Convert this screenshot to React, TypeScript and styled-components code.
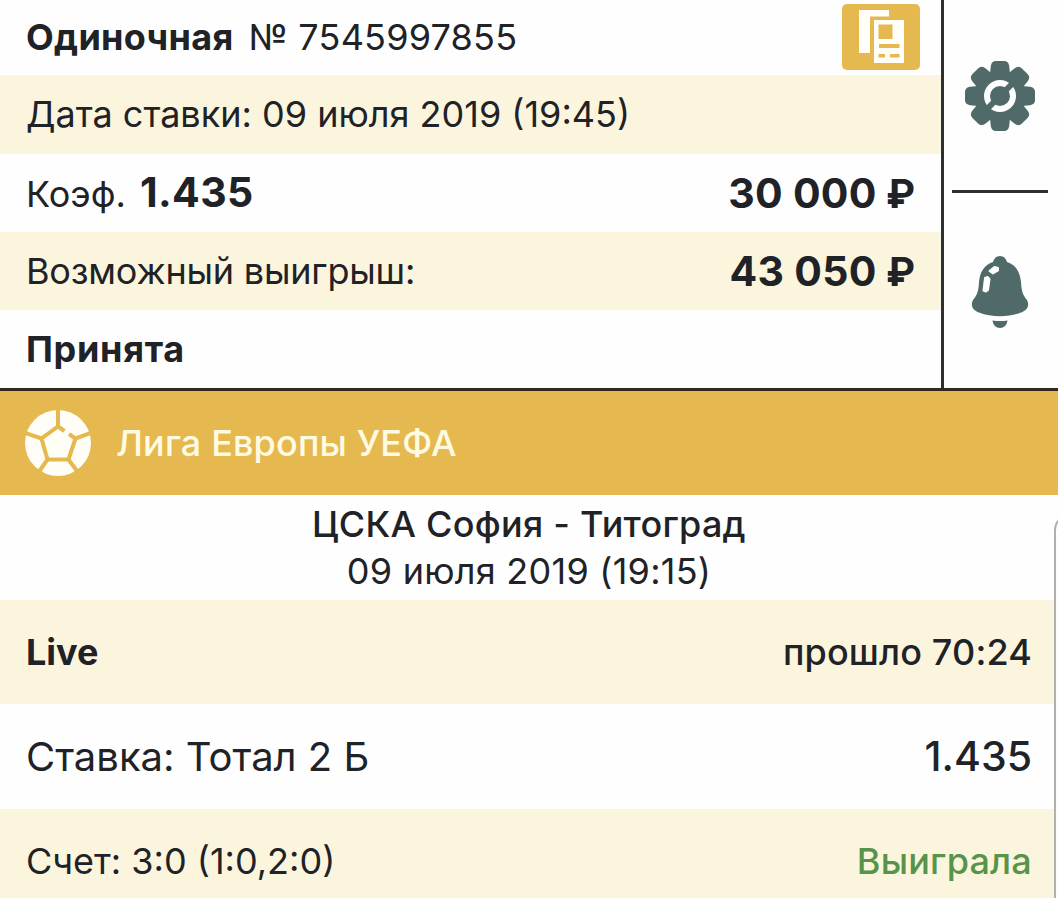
import React from 'react';
import styled, { createGlobalStyle } from 'styled-components';

const GlobalStyle = createGlobalStyle`
  * {
    box-sizing: border-box;
  }
  body {
    margin: 0;
    background: #fefefe;
    color: #1f2226;
    font-family: Inter, 'Liberation Sans', sans-serif;
    overflow: hidden;
  }
`;

const CopyIcon = () => (
  <svg width="78" height="66" viewBox="0 0 78 66">
    <path fill="#fffef8" d="M17 6H47V12.500H28V49H17Z" />
    <path
      fill="#fffef8"
      fillRule="evenodd"
      d="M32 16H62V59H32ZM36.500 20.500V35H50.500V20.500ZM37 40V44H57.500V40ZM36.500 50V53.500H43V50ZM48 50V53.500H57.500V50Z"
    />
  </svg>
);

const GearIcon = () => (
  <svg width="72" height="72" viewBox="-36 -36 72 72">
    <g fill="#4f6a69">
      <circle r="25.500" />
      {[0, 45, 90, 135, 180, 225, 270, 315].map(angle => (
        <path
          key={angle}
          d="M-10 -22L-9.200 -30Q-8.500 -35 -4 -35H4Q8.500 -35 9.200 -30L10 -22Z"
          transform={`rotate(${angle})`}
        />
      ))}
    </g>
    <circle r="13" fill="none" stroke="#fff" strokeWidth="6" />
    <path d="M-14 14L14 -14" stroke="#4f6a69" strokeWidth="6" />
  </svg>
);

const BellIcon = () => (
  <svg width="58" height="74" viewBox="0 0 58 74">
    <path
      fill="#4f6a69"
      d="M22 7C23 3 25.500 1 29 1S35 3 36 7C45 10 49 17 50 27C50.500 37 52 40 56 45C59 51 56 55 50 57.500C37 62.500 21 62.500 8 57.500C2 55 -1 51 2 45C6 40 7.500 37 8 27C9 17 13 10 22 7Z"
    />
    <path
      fill="#4f6a69"
      d="M21.500 65.500Q29 66.500 36.500 65.500C36 70 33 73 29 73S22 70 21.500 65.500Z"
    />
    <g fill="#fff" stroke="#fff" strokeWidth="2" strokeLinejoin="round">
      <path d="M18.500 16L23.500 12L27 13V15.500L22 18.500Z" />
      <path d="M14 23L16.500 22L18.500 24L17 35L15 36.500L12.500 35.500Z" />
    </g>
  </svg>
);

const BallIcon = () => (
  <svg width="66" height="66" viewBox="0 0 66 66">
    <circle cx="33" cy="33" r="33" fill="#fffef6" />
    <g fill="none" stroke="#e5b94f" strokeWidth="4">
      <path d="M39.500 21L33 16.500L16.500 28.500L22.500 49.500H43.500L50.500 28.500L44 24" />
      <path d="M33 0V16.500M16.500 28.500L0 23M22.500 49.500L14.500 61M43.500 49.500L52 61M50.500 28.500L66 23" />
    </g>
  </svg>
);

const Amount = ({ value }: { value: string }) => (
  <AmountText size={41} weight={700} spacing={0.3}>
    {value} <Ruble>₽</Ruble>
  </AmountText>
);

const App = () => (
  <Page>
    <GlobalStyle />
    <Summary>
      <Details>
        <Row height={75}>
          <Group gap={15}>
            <Text size={36} weight={700} spacing={0.3}>Одиночная</Text>
            <Text size={36} spacing={0.2}>№ 7545997855</Text>
          </Group>
          <CopyButton type="button" aria-label="Копировать">
            <CopyIcon />
          </CopyButton>
        </Row>
        <Row height={79} tinted>
          <Text size={36}>Дата ставки: 09 июля 2019 (19:45)</Text>
        </Row>
        <Row height={78}>
          <Group gap={14}>
            <Text size={36}>Коэф.</Text>
            <Text size={41} weight={700} spacing={0.4}>1.435</Text>
          </Group>
          <Amount value="30 000" />
        </Row>
        <Row height={78} tinted>
          <Text size={36} spacing={-0.2}>Возможный выигрыш:</Text>
          <Amount value="43 050" />
        </Row>
        <Row height={78}>
          <Text size={36} weight={700} spacing={0.7}>Принята</Text>
        </Row>
      </Details>
      <Actions>
        <Action shift={2}>
          <GearIcon />
        </Action>
        <Divider />
        <Action shift={7}>
          <BellIcon />
        </Action>
      </Actions>
    </Summary>
    <League>
      <BallIcon />
      <Text size={36} weight={500} spacing={0.15}>Лига Европы УЕФА</Text>
    </League>
    <Match>
      <Text size={36} weight={500} spacing={0.25}>ЦСКА София - Титоград</Text>
      <Text size={36} spacing={0.25}>09 июля 2019 (19:15)</Text>
    </Match>
    <Row height={104} tinted>
      <Text size={36} weight={700}>Live</Text>
      <Text size={36} weight={500} spacing={0.15}>прошло 70:24</Text>
    </Row>
    <Row height={105}>
      <Text size={40}>Ставка: Тотал 2 Б</Text>
      <Text size={41} weight={500}>1.435</Text>
    </Row>
    <Row height={105} tinted>
      <Text size={36}>Счет: 3:0 (1:0,2:0)</Text>
      <Text size={36} weight={500} spacing={0.2} color="#57944a">Выиграла</Text>
    </Row>
    <EdgePanel />
  </Page>
);

export default App;

const Page = styled.main`
  position: relative;
  width: 1058px;
  height: 898px;
  overflow: hidden;
`;

const Summary = styled.section`
  display: flex;
  height: 391px;
  border-bottom: 3px solid #30291b;
`;

const Details = styled.div`
  flex: 1;
`;

const Row = styled.div<{ height: number; tinted?: boolean }>`
  display: flex;
  align-items: center;
  justify-content: space-between;
  height: ${({ height }) => height}px;
  padding: 0 26px;
  background: ${({ tinted }) => (tinted ? '#fcf5de' : '#fefefe')};
`;

const Group = styled.div<{ gap: number }>`
  display: flex;
  align-items: baseline;
  gap: ${({ gap }) => gap}px;
`;

const Text = styled.span<{
  size: number;
  weight?: number;
  spacing?: number;
  color?: string;
}>`
  font-size: ${({ size }) => size}px;
  font-weight: ${({ weight }) => weight || 400};
  letter-spacing: ${({ spacing }) => spacing || 0}px;
  line-height: 47px;
  white-space: nowrap;
  ${({ color }) => color && `color: ${color};`}
`;

const AmountText = styled(Text)`
  padding-top: 2px;
`;

const Ruble = styled.span`
  font-family: Roboto, sans-serif;
  font-size: 40px;
  letter-spacing: 0;
`;

const CopyButton = styled.button`
  display: flex;
  width: 78px;
  height: 66px;
  margin: 0 -5px 2px 0;
  padding: 0;
  border: none;
  border-radius: 5px;
  background: #e5b94f;
`;

const Actions = styled.aside`
  display: flex;
  flex-direction: column;
  align-items: center;
  width: 117px;
  padding-right: 2px;
  border-left: 3px solid #2c302e;
`;

const Action = styled.div<{ shift: number }>`
  display: flex;
  align-items: center;
  justify-content: center;
  height: 190px;
  padding-top: ${({ shift }) => shift}px;
`;

const Divider = styled.div`
  flex-shrink: 0;
  width: 96px;
  height: 3px;
  background: #2c302e;
`;

const League = styled.header`
  display: flex;
  align-items: center;
  gap: 25px;
  height: 104px;
  padding: 0 25px;
  background: #e5b94f;
  color: #fffbe2;
`;

const Match = styled.div`
  display: flex;
  flex-direction: column;
  align-items: center;
  justify-content: center;
  height: 105px;
`;

const EdgePanel = styled.div`
  position: absolute;
  top: 514px;
  left: 1054px;
  width: 40px;
  height: 420px;
  border: 2px solid #b0b0ae;
  border-radius: 16px;
  background: #fdfdfb;
`;
